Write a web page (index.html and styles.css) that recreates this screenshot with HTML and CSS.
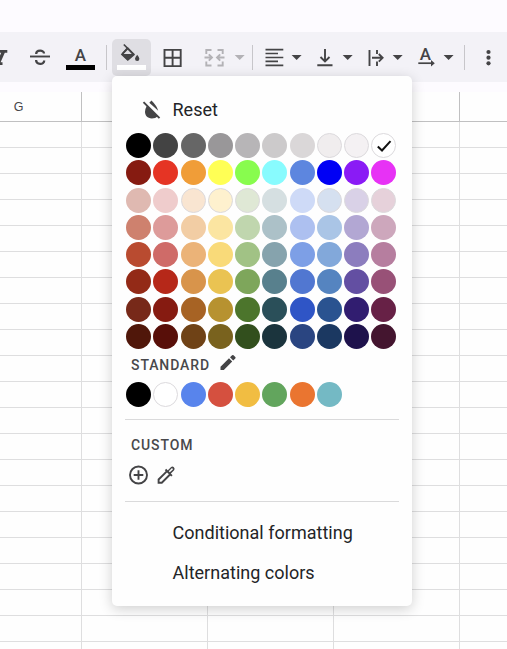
FILE: index.html
```html
<!DOCTYPE html>
<html lang="en">
<head>
<meta charset="utf-8">
<title>Fill color</title>
<link rel="stylesheet" href="styles.css">
</head>
<body>
<div class="app">
  <div class="toolbar">
    <svg class="tool" width="20" height="37" viewBox="0 39 20 37"><path class="solid" d="M-3 50H7.3V52.7H4.8L.6 62.3H2.5V65H-6V62.3H-3L1.2 52.7H-3Z"/></svg>
    <svg class="tool" width="38" height="37" viewBox="20 39 38 37"><path class="line" d="M30 56.5H50"/><path class="line heavy" d="M36.2 54C36.2 49.6 44 49.8 44 53.4M36.1 60C36.1 64.9 44.2 65.1 44.2 60.6"/></svg>
    <svg class="tool" width="48" height="37" viewBox="58 39 48 37"><text class="glyph" x="80.5" y="60.5">A</text><path d="M66 65H95V70H66Z"/></svg>
    <span class="separator"></span>
    <button class="fill-button" aria-label="Fill color"><svg width="39" height="37" viewBox="112 39 39 37"><path class="line thin" d="M123.8 44.5L134 54.6M127.8 47.8L122.2 54"/><path class="line thin" d="M127.8 48.3L133.8 54.6L127.8 59.8L122 54.4Z"/><path class="solid" d="M121.5 54H134.5L128.8 59.5Q127.8 60.3 126.8 59.5ZM137.2 54.7Q139.4 57.4 139.4 58.8A2.2 2.2 0 0 1 135 58.8Q135 57.4 137.2 54.7Z"/><path class="white" d="M117 65H146V70H117Z"/></svg></button>
    <svg class="tool" width="42" height="37" viewBox="151 39 42 37"><path class="line" d="M164.5 49.9H180.7V66.1H164.5ZM172.6 50V66M165 57.8H181"/></svg>
    <svg class="tool muted" width="59" height="37" viewBox="193 39 59 37"><path class="line" d="M211.5 50H206.3V54M206.3 61.5V65.5H211.5M217.5 50H222.7V54M222.7 61.5V65.5H217.5M204.5 57.5H211.5M208.8 54.3L212 57.5L208.8 60.7M224.5 57.5H217.5M220.2 54.3L217 57.5L220.2 60.7"/><path class="solid" d="M234.7 55H244.7L239.7 60Z"/></svg>
    <span class="separator"></span>
    <svg class="tool" width="55" height="37" viewBox="253 39 55 37"><path class="line thin" d="M265.5 49.6H283.3M265.5 53.5H278M265.5 57.5H283.3M265.5 61.4H278M265.5 65.3H283.3"/><path class="solid" d="M291.6 55H301.6L296.6 60Z"/></svg>
    <svg class="tool" width="52" height="37" viewBox="308 39 52 37"><path class="line" d="M325 49V61M320.5 57L325 61.4L329.5 57M317.3 65.3H332.5"/><path class="solid" d="M342.7 55H352.7L347.7 60Z"/></svg>
    <svg class="tool" width="50" height="37" viewBox="360 39 50 37"><path class="line" d="M369.5 50V66M377 50V54M377 61.5V66M372 57.8H382.3M378.8 54L382.6 57.8L378.8 61.6"/><path class="solid" d="M392.7 55H402.7L397.7 60Z"/></svg>
    <svg class="tool" width="54" height="37" viewBox="410 39 54 37"><text class="glyph" x="425.5" y="60">A</text><path class="line thin" d="M418.3 63.2H433"/><path class="solid" d="M431 60L434.8 63.2L431 66.4ZM443.6 55H453.6L448.6 60Z"/></svg>
    <span class="separator"></span>
    <svg class="tool" width="42" height="37" viewBox="465 39 42 37"><circle class="solid" cx="488.5" cy="52" r="2.1"/><circle class="solid" cx="488.5" cy="57.7" r="2.1"/><circle class="solid" cx="488.5" cy="63.3" r="2.1"/></svg>
  </div>
  <div class="sheet">
    <div class="columns"><span class="column">G</span><span class="column"></span><span class="column"></span><span class="column"></span><span class="column last"></span></div>
    <div class="cells"></div>
  </div>
</div>

<div class="menu">
  <div class="reset">
    <svg width="22" height="22" viewBox="141 99 22 22"><path class="solid" d="M151.5 100.5Q157 106 158.2 110.8L149.3 102.8ZM147 105.5L157.9 116.2Q155.5 118.4 151.8 118.4C147.5 118.4 145 115.4 145 111.8Q145 109 147 105.5Z"/><path class="line" d="M143.5 102.2L159.5 118.2"/></svg>
    <span>Reset</span>
  </div>
  <div class="palette" id="palette"></div>
  <div class="heading standard"><span>STANDARD</span>
    <svg width="18" height="18" viewBox="219 353 18 18"><path class="solid" d="M220.5 366.8V370H223.8L232.2 361.5L229 358.3ZM230 357.3L232.1 355.2Q232.8 354.6 233.5 355.2L235.3 357Q236 357.7 235.3 358.4L233.2 360.5Z"/></svg>
  </div>
  <div class="palette" id="standard"></div>
  <hr>
  <div class="heading custom">CUSTOM</div>
  <div class="custom-tools">
    <svg width="20" height="20" viewBox="129 465 20 20"><circle class="line" cx="138.5" cy="475" r="8.5"/><path class="line" d="M138.5 470.2V479.8M133.7 475H143.3"/></svg>
    <svg width="20" height="20" viewBox="156 465 20 20"><path class="line" d="M166.8 471.3L158.6 479.5V482.7H161.8L170 474.5"/><path class="line" d="M165.5 469.5L171.9 475.9"/><path class="solid" d="M167.1 471L171.1 467Q172.5 465.9 173.9 467.2Q175.3 468.6 174.1 470.2L170.1 474.2Z"/><path class="shine" d="M169.3 471.8L172.5 468.6"/></svg>
  </div>
  <hr>
  <div class="actions"><div>Conditional formatting</div><div>Alternating colors</div></div>
</div>
<script src="palette.js"></script>
</body>
</html>
```
FILE: styles.css
```css
* { box-sizing: border-box; }
body { margin: 0; overflow: hidden; font-family: Roboto, sans-serif; color: #232427; background: #fdfbff; }
svg { display: block; flex: none; overflow: visible; }
.solid { fill: #444446; }
.line { fill: none; stroke: #444446; stroke-width: 1.9; }
.thin { stroke-width: 1.7; }
.heavy { stroke-width: 2.3; }
.white { fill: #fff; }
.shine { fill: none; stroke: #fdfdfd; stroke-width: 1.5; }
.glyph { fill: #444446; font-size: 17px; font-weight: 500; text-anchor: middle; }
.muted .solid { fill: #b3b2b6; }
.muted .line { stroke: #b3b2b6; }

.app { display: flex; flex-direction: column; width: 507px; height: 649px; padding-top: 32px; overflow: hidden; }
.toolbar { display: flex; flex: none; height: 50px; padding-top: 7px; background: #f3f2f7; }
.toolbar .tool { overflow: hidden; }
.separator { flex: none; width: 1px; height: 25px; margin-top: 6px; background: #c7c6ca; }
.fill-button { flex: none; width: 39px; height: 37px; margin-left: 5px; padding: 0; border: 0; border-radius: 5px; background: #dfdee3; }

.sheet { display: flex; flex: 1; flex-direction: column; margin-top: 10px; background: #fefefe; }
.columns { display: flex; height: 30px; border-bottom: 1px solid #c0c0c1; }
.column { flex: none; width: 126px; padding-top: 7px; border-right: 1px solid #c0c0c1; font: 12.5px/16px "Liberation Sans", sans-serif; color: #464649; text-align: center; }
.column:first-child { width: 82px; padding-right: 44px; }
.column.last { flex: 1; width: auto; border: 0; }
.cells {
  flex: 1;
  background-image:
    linear-gradient(to right, #dededf 1px, transparent 1px),
    linear-gradient(to bottom, #dededf 1px, transparent 1px);
  background-size: 126px 100%, 100% 26px;
  background-position: 81px 0, 0 25px;
}

.menu {
  position: absolute; left: 112px; top: 76px; width: 300px; height: 530px;
  padding: 23px 13px 0; border-radius: 5px; background: #fefefe;
  box-shadow: 0 3px 13px rgba(0, 0, 0, .19);
}
.reset { display: flex; align-items: flex-start; height: 22px; margin: 0 0 12px 16px; font-size: 18px; line-height: 21px; }
.reset span { margin-left: 9.5px; }
.palette { display: grid; grid-template-columns: repeat(10, 27.25px); grid-auto-rows: 27.25px; margin-left: 1px; }
.swatch { display: grid; place-items: center; width: 25px; height: 25px; border-radius: 50%; }
.outlined { border: 1px solid #dcdadd; }
.heading { display: flex; font-size: 14px; line-height: 18px; font-weight: 500; letter-spacing: .9px; color: #48484b; }
.standard { height: 31px; margin-left: 6px; }
.standard span { width: 88px; padding-top: 5px; }
.standard svg { margin-top: 2px; }
#standard { height: 37px; }
hr { height: 1px; margin: 0; border: 0; background: #dadadb; }
.custom { height: 45px; padding: 16px 0 0 6px; }
.custom-tools { display: flex; gap: 7px; height: 36px; padding-left: 4px; }
.actions { padding: 11px 0 0 47.5px; font-size: 18px; line-height: 40px; letter-spacing: .015px; white-space: nowrap; }
```
FILE: palette.js
```js
const shades = [
  "#000000 #434343 #666666 #999799 #b7b5b7 #cccacb #dad7d8 #f0edee #f4f1f3 #ffffff",
  "#861b11 #e53424 #f09d38 #ffff55 #88fc4e #88fbfe #5d86df #0000f5 #8a1bf5 #e732f5",
  "#dfb9b1 #efcccc #f9e5d1 #fef1ce #dfe8d5 #d5dfe1 #cedaf7 #d5e0f0 #d9d1e7 #e6d1da",
  "#ce816e #dd9b9a #f2cda4 #fbe5a1 #c0d6ae #acc1c8 #adc0f0 #aac5e6 #b2a7d3 #cda7bc",
  "#b94b30 #cf6b68 #ebb378 #f9da79 #a1c285 #86a3ad #7d9fe6 #82a8da #8c7dbe #b67e9f",
  "#932a17 #b62819 #d8944b #eac352 #7ea65b #58808d #5177d1 #5584c0 #634fa2 #985177",
  "#772919 #861b11 #a76324 #b79230 #4c752c #2a4f59 #2f55c6 #2a5390 #311d70 #672146",
  "#50170a #580f09 #6f4216 #79621e #324f1d #1b343d #2a4581 #1b3861 #1e124c #44152f"
];
const light = ["0-7", "0-8", "0-9", "2-2", "2-3", "2-4", "2-7", "2-8", "2-9"];
const check = '<svg width="16" height="12" viewBox="0 0 16 12"><path d="M1.8 6.5L6 10.5L14.5 1.2" fill="none" stroke="#111" stroke-width="2"/></svg>';

function addSwatch(parent, color, outlined, checked) {
  const dot = document.createElement("div");
  dot.className = outlined ? "swatch outlined" : "swatch";
  dot.style.backgroundColor = color;
  if (checked) dot.innerHTML = check;
  parent.append(dot);
}

const palette = document.getElementById("palette");
shades.forEach((row, r) => row.split(" ").forEach((color, c) =>
  addSwatch(palette, color, light.includes(`${r}-${c}`), r === 0 && c === 9)));

const standard = document.getElementById("standard");
"#000000 #ffffff #5884ec #d5503f #f1bd42 #62a55d #ea7530 #74b9c4".split(" ")
  .forEach((color) => addSwatch(standard, color, color === "#ffffff", false));
```
